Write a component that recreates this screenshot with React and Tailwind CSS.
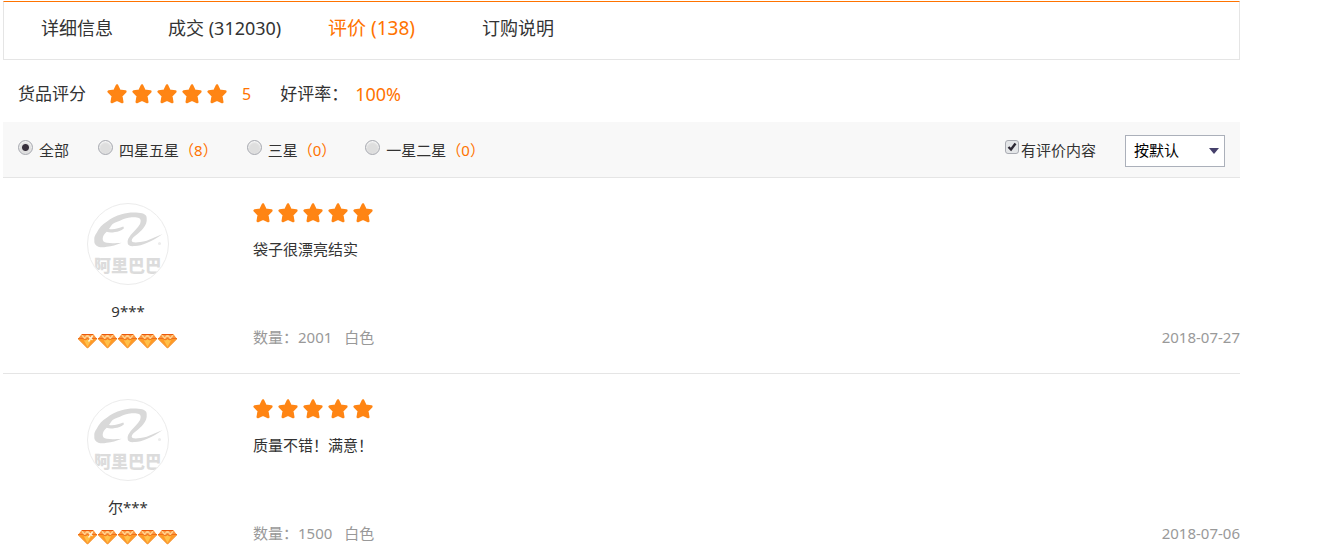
import { useState } from 'react'

const tabs = [
  { label: '详细信息', width: 'w-[127px]' },
  { label: '成交 (312030)', width: 'w-[160px]' },
  { label: '评价 (138)', width: 'w-[154px]', active: true },
  { label: '订购说明', width: 'w-[127px]' },
]

const filters = [
  { id: 'all', label: '全部' },
  { id: 'good', label: '四星五星', count: 8 },
  { id: 'medium', label: '三星', count: 0 },
  { id: 'bad', label: '一星二星', count: 0 },
]

const reviews = [
  { user: '9***', text: '袋子很漂亮结实', amount: '2001', color: '白色', date: '2018-07-27' },
  { user: '尔***', text: '质量不错！满意！', amount: '1500', color: '白色', date: '2018-07-06' },
]

function Stars() {
  return (
    <div className="flex gap-[5px]" role="img" aria-label="5 星">
      {[1, 2, 3, 4, 5].map((n) => (
        <svg key={n} className="size-5" viewBox="0 0 20 20" fill="#ff8514">
          <path
            d="M10 1.500 12.500 6.800 18.300 7.600 14.200 11.900 15.200 18 10 15.600 4.800 18 5.800 11.900 1.700 7.600 7.500 6.800Z"
            stroke="#ff8514"
            strokeWidth="2.600"
            strokeLinejoin="round"
          />
        </svg>
      ))}
    </div>
  )
}

function Diamond({ shiny }) {
  return (
    <svg className="h-4 w-5" viewBox="0 0 20 16">
      <path d="M4 1H15L19 6 9.500 15.500 0 6Z" fill="#ff9a24" />
      <path d="M4 1H15L19 6H0Z" fill="#fb9440" />
      <path d="M4 2 6.500 5.500 9.500 2 12.500 5.500 15 2" fill="none" stroke="#ffd08a" strokeWidth="1.4" />
      <path d="M5.500 6.500H13.500L9.500 14Z" fill="#ffc04a" />
      <path d="M.5 6 9.500 15 18.500 6" fill="none" stroke="#f39a45" />
      <path d="M4 1.500H15" stroke="#ea5b0c" />
      <path d="M0 5.500H5L7 7 9.500 5.500 12 7 14 5.500H19" fill="none" stroke="#f0701a" />
      {shiny && <path d="M14.500 3 10.500 8.500M11 4 14.500 7" stroke="#fff3d6" strokeWidth="1.3" />}
    </svg>
  )
}

function Avatar() {
  return (
    <div className="relative size-[82px] overflow-hidden rounded-full border border-[#ececec]">
      <svg className="size-20" viewBox="0 0 80 80" fill="#d9d9d9">
        <path d="M6.300 36C6 33 7 31 8.700 28.700C11 24 14 20.500 18.700 17.700C23 14 28 12 33.700 10.300C39 8.500 45 8 50.300 8.700C56 9 59 11 58.700 14.300C59 18 58 21 55.300 24.300C51 30 44 33 43.700 36.500C43.500 39 49 39 58.700 36.700L74.700 30C69 34 64 37 58.700 39C54 41 51 42 47 42C42 42.500 40 41.500 39.700 39.300C39 36 41 33.500 42.700 31C46 27 50 24 52 20C53 17 53 15 51 14C49 13 46 13 43.700 13.300C39 14 35 15 32 16.700C28 18 25 19 23.700 21L21 25C26 26 31 24 35.300 22.500L36 24.300C33 27 30 27.700 27 28C23 29 21 28.500 18.700 27.700C16 30 15 32 14.700 34.500C14.500 37 16 38.500 18.700 38.700C24 39.500 28 39 33.700 38.700C28 41 24 42.500 18.700 42.700C15 43.500 13 43.500 10.300 42.700C7 41.500 6 39 6.300 36Z" />
        <circle cx="71.500" cy="39.500" r="1.500" fill="#ececec" />
      </svg>
      <span className="absolute inset-x-0 top-[50px] text-center text-[17px] leading-6 font-black text-[#dcdcdc]">
        阿里巴巴
      </span>
    </div>
  )
}

function Review({ review }) {
  return (
    <li className="flex border-b border-[#e5e5e5] pt-[25px] pb-6">
      <div className="flex w-[250px] shrink-0 flex-col items-center">
        <Avatar />
        <div className="mt-4 leading-5">{review.user}</div>
        <div className="mt-3 flex" role="img" aria-label="五钻买家">
          {[1, 2, 3, 4, 5].map((n) => (
            <Diamond key={n} shiny={n === 1} />
          ))}
        </div>
      </div>
      <div className="flex flex-1 flex-col pb-0.5">
        <Stars />
        <p className="mt-4 leading-5">{review.text}</p>
        <div className="mt-auto flex justify-between leading-5 text-[#999]">
          <div className="flex gap-3">
            <span>数量：{review.amount}</span>
            <span>{review.color}</span>
          </div>
          <time dateTime={review.date}>{review.date}</time>
        </div>
      </div>
    </li>
  )
}

export default function App() {
  const [filter, setFilter] = useState('all')
  const [withContent, setWithContent] = useState(true)

  return (
    <main className="mr-[89px] ml-[3px] pt-px font-['Noto_Sans','Noto_Sans_CJK_SC',sans-serif] text-[15px] text-[#333]">
      <nav className="flex h-[59px] border border-[#e5e5e5] border-t-[#ff7300] pl-[37px] text-lg leading-[53px]">
        {tabs.map((tab) => (
          <div key={tab.label} className={tab.width}>
            <a href="#" className={tab.active ? 'text-[19px] text-[#ff7300]' : ''}>
              {tab.label}
            </a>
          </div>
        ))}
      </nav>

      {/* Overall score */}
      <div className="flex h-[62px] items-center pt-1.5 pl-[15px] text-[17px]">
        <span className="mr-[21px]">货品评分</span>
        <Stars />
        <span className="ml-[15px] text-base text-[#ff7300]">5</span>
        <span className="ml-[29px]">好评率：</span>
        <span className="ml-[7px] text-lg text-[#ff7300]">100%</span>
      </div>

      {/* Filters */}
      <div className="flex h-14 items-center justify-between border-b border-[#e5e5e5] bg-[#f8f8f8] px-[15px] pt-0.5">
        <div className="flex gap-[29px]">
          {filters.map((item) => (
            <label key={item.id} className="flex items-center">
              <input
                type="radio"
                name="rating"
                checked={filter === item.id}
                onChange={() => setFilter(item.id)}
                className="mr-1.5 mb-1.5 size-[15px] appearance-none rounded-full border border-[#a9abb2] bg-[#dedede] shadow-[inset_0_1px_2px_#fff] checked:bg-[radial-gradient(circle,#37303c_0_3px,#dedede_4px)]"
              />
              {item.label}
              {item.count !== undefined && <span className="text-[#ff7300]">（{item.count}）</span>}
            </label>
          ))}
        </div>
        <div className="flex items-center gap-[29px]">
          <label className="flex items-center">
            <span className="relative mr-0.5 mb-2 flex">
              <input
                type="checkbox"
                checked={withContent}
                onChange={(e) => setWithContent(e.target.checked)}
                className="size-3.5 appearance-none rounded-[3px] border border-[#a9abb2] bg-[#e4e6e8]"
              />
              {withContent && (
                <svg className="pointer-events-none absolute inset-0 size-3.5" viewBox="0 0 14 14" fill="none">
                  <path d="M3.500 7 6 9.500 10.500 3.500" stroke="#2c2833" strokeWidth="2.400" />
                </svg>
              )}
            </span>
            有评价内容
          </label>
          <div className="relative">
            <select
              aria-label="排序"
              className="block h-8 w-[100px] appearance-none border border-[#abb0ba] bg-white pl-2 text-black"
            >
              <option>按默认</option>
              <option>按时间</option>
            </select>
            <svg className="pointer-events-none absolute top-[13px] right-[5px] h-1.5 w-3" viewBox="0 0 12 6">
              <path d="M1 0H11L6 6Z" fill="#45406b" />
            </svg>
          </div>
        </div>
      </div>

      <ul>
        {reviews.map((review) => (
          <Review key={review.user} review={review} />
        ))}
      </ul>
    </main>
  )
}
